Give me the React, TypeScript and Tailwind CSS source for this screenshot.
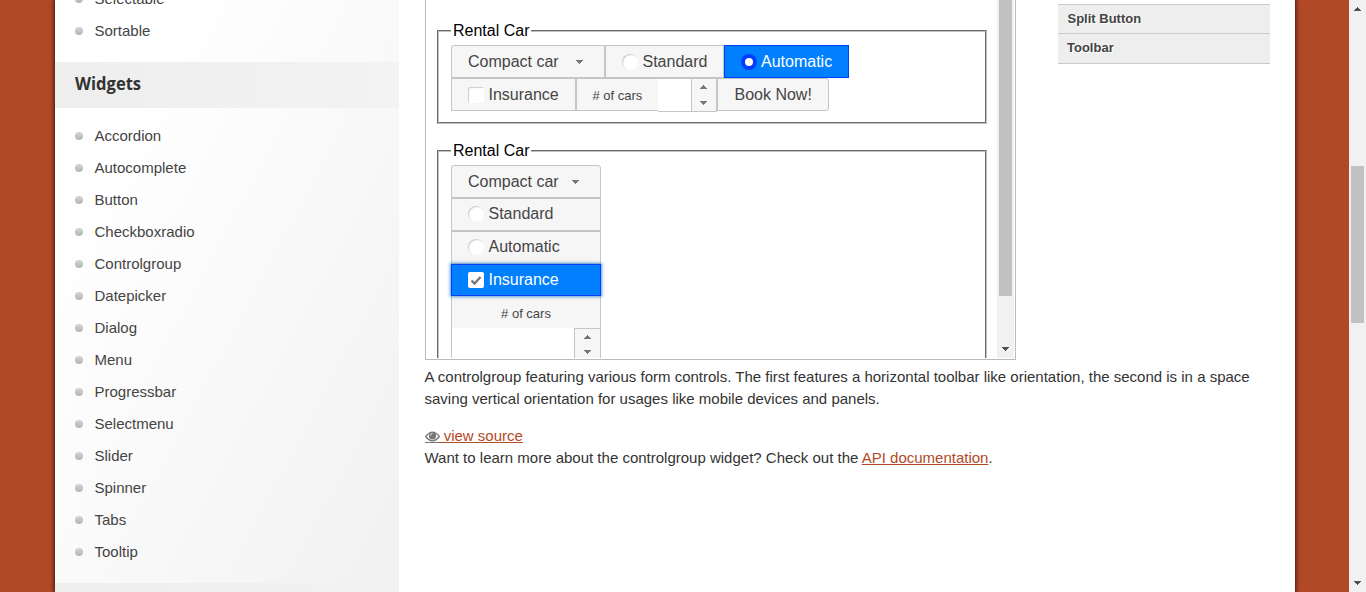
import React from "react";

const widgets = ["Accordion","Autocomplete","Button","Checkboxradio","Controlgroup","Datepicker","Dialog","Menu","Progressbar","Selectmenu","Slider","Spinner","Tabs","Tooltip"];

function NavItem({ label }: { label: string }) {
  return (
    <li className="flex h-8 items-center pl-5 text-[15px] text-[#444]">
      <span className="mr-[11.5px] size-2 rounded-full bg-linear-to-b from-[#d4d4d4] to-[#b4b4b4]" />
      {label}
    </li>
  );
}

function Arrow({ dir = "down", className = "fill-[#505050]" }: { dir?: "up" | "down"; className?: string }) {
  return (
    <svg width="7" height="4" viewBox="0 0 7 4" className={"block shrink-0 " + className} shapeRendering="crispEdges">
      <path d={dir === "down" ? "M0 0h7v1H0zM1 1h5v1H1zM2 2h3v1H2zM3 3h1v1H3z" : "M3 0h1v1H3zM2 1h3v1H2zM1 2h5v1H1zM0 3h7v1H0z"} />
    </svg>
  );
}

function Cell({ className, children }: { className: string; children: React.ReactNode }) {
  return <div className={"flex shrink-0 items-center border whitespace-nowrap " + className}>{children}</div>;
}

const plain = "border-[#c5c5c5] bg-[#f6f6f6] text-[#454545] ";
const radio = "mr-[4.5px] size-4 shrink-0 rounded-full bg-white shadow-[inset_1px_1px_1px_#ccc]";
const box = "mr-[4.5px] size-4 shrink-0 rounded-[2px] bg-white";
const spin = "flex h-[34px] flex-col items-start border border-[#c5c5c5] bg-[#f6f6f6] ";

export default function App() {
  return (
    <div className="flex h-[592px] w-[1366px] overflow-hidden bg-[#b24926] font-['Liberation_Sans',sans-serif]">
      <div className="ml-[55px] flex w-[1240px] shrink-0 bg-white shadow-[0_0_4px_1px_rgba(0,0,0,0.7)]">
        <aside className="h-full w-[344px] shrink-0 overflow-hidden bg-linear-[118deg,#fff_20%,#f1f1f1]">
          <ul className="-mt-[17px]">
            <NavItem label="Selectable" />
            <NavItem label="Sortable" />
          </ul>
          <h3 className="mt-[15px] h-[46px] bg-linear-to-r from-[#eee] to-[#f3f3f3] pl-[19.5px] font-['Open_Sans',sans-serif] text-[18px] leading-[42px] font-bold text-[#333]">
            <span className="inline-block origin-left scale-x-[0.92]">Widgets</span>
          </h3>
          <ul className="mt-3">
            {widgets.map((w) => <NavItem key={w} label={w} />)}
          </ul>
          <div className="mt-[15px] h-3 bg-linear-to-r from-[#eee] to-[#f2f2f2]" />
        </aside>

        <main className="ml-[26px] w-[830px] shrink-0 text-[15px] leading-[22px] text-[#333]">
          <div className="flex h-[360px] w-[591px] overflow-hidden border border-t-0 border-[#bbb] pr-px pb-px">
            <div className="h-[358px] w-[571px] overflow-hidden pl-[11px] text-[16px] leading-[18px] text-black">
              <fieldset className="mt-[22px] h-[102px] w-[550px] border-2 border-[#c0c0c0] px-3 pt-[5px] [border-style:groove]">
                <legend className="h-[18px] px-[2px]">Rental Car</legend>
                <div className="flex">
                  <Cell className={plain + "h-[33px] w-[154px] justify-between rounded-tl-[3px] px-4"}>Compact car <Arrow className="mr-[5px] fill-[#777]" /></Cell>
                  <Cell className={plain + "h-[33px] w-[119px] pl-4"}><span className={radio} />Standard</Cell>
                  <Cell className="h-[33px] w-[125px] border-[#003eff] bg-[#007fff] pl-4 text-white"><span className="mr-1 size-4 shrink-0 rounded-full border-4 border-[#003eff] bg-white" />Automatic</Cell>
                </div>
                <div className="flex">
                  <Cell className={plain + "h-[33px] w-[125px] pl-4"}><span className={box + " shadow-[inset_1px_1px_1px_#ccc]"} />Insurance</Cell>
                  <Cell className={plain + "h-[33px] w-[82px] border-r-0 pt-0.5 pl-[15.5px] text-[13px]"}># of cars</Cell>
                  <div className="h-[34px] w-[33px] border-y border-[#c5c5c5] bg-white" />
                  <div className={spin + "w-[26px] pt-1.5 pl-2"}>
                    <Arrow dir="up" className="mb-3 fill-[#777]" />
                    <Arrow className="fill-[#777]" />
                  </div>
                  <Cell className={plain + "h-[33px] w-[112px] rounded-r-[3px] pl-[16.5px]"}>Book Now!</Cell>
                </div>
              </fieldset>
              <fieldset className="mt-[18px] h-[300px] w-[550px] border-2 border-[#c0c0c0] px-3 pt-[5px] [border-style:groove]">
                <legend className="h-[18px] px-[2px]">Rental Car</legend>
                <div className="flex w-[150px] flex-col">
                  <Cell className={plain + "h-[33px] justify-between rounded-t-[3px] px-4"}>Compact car <Arrow className="mr-[5px] fill-[#777]" /></Cell>
                  <Cell className={plain + "h-[33px] pb-0.5 pl-4"}><span className={radio} />Standard</Cell>
                  <Cell className={plain + "h-[33px] pb-0.5 pl-4"}><span className={radio} />Automatic</Cell>
                  <Cell className="relative h-8 border-[#003eff] bg-[#007fff] pl-4 text-white shadow-[0_0_3px_1px_rgb(94,158,214)]">
                    <span className={box}>
                      <svg width="16" height="16" viewBox="0 0 16 16" fill="none" stroke="#777" strokeWidth="2.4"><path d="M3.5 8.5l3 3L12.5 5" /></svg>
                    </span>Insurance
                  </Cell>
                  <Cell className={plain + "h-8 justify-center border-y-0 pt-1 text-[13px]"}># of cars</Cell>
                  <div className="flex border-l border-[#c5c5c5]">
                    <div className="flex-1" />
                    <div className={spin + "w-[27px] pt-1.5 pl-[9px]"}>
                      <Arrow dir="up" className="mb-[11px] fill-[#777]" />
                      <Arrow className="fill-[#777]" />
                    </div>
                  </div>
                </div>
              </fieldset>
            </div>
            <div className="flex w-[17px] shrink-0 flex-col items-center bg-[#f1f1f1]">
              <div className="h-[296px] w-[13px] shrink-0 bg-[#c1c1c1]" />
              <div className="mt-[51px]"><Arrow /></div>
            </div>
          </div>
          <div className="-ml-[0.5px] pt-1.5">
            <p>A controlgroup featuring various form controls. The first features a horizontal toolbar like orientation, the second is in a space saving vertical orientation for usages like mobile devices and panels.</p>
            <div className="mt-[15px] flex items-center text-[#b24926]">
              <span className="flex h-[13px] w-[15px] items-start border-b border-[#777]">
                <svg width="15" height="12" viewBox="0 0 15 12" className="mt-px shrink-0"><path d="M.7 5.5Q7.5-3.2 14.3 5.5Q7.5 14.2.7 5.5Z" fill="none" stroke="#777" strokeWidth="1.3" /><circle cx="7.5" cy="4.8" r="3.6" fill="#777" /><path d="M5.5 4.5a2 2 0 0 1 2-2" fill="none" stroke="#fff" strokeWidth=".8" /></svg>
              </span>
              <span className="whitespace-pre underline"> view source</span>
            </div>
            <p>Want to learn more about the controlgroup widget? Check out the <a className="text-[#b24926] underline">API documentation</a>.</p>
          </div>
        </main>

        <div className="-ml-[197px] mt-1 h-[60px] w-[212px] border-y border-[#ccc] bg-[#eee] text-[13px] font-bold text-[#444] [text-shadow:1px_1px_0_#fff]">
          <div className="h-[29px] border-b border-[#ccc] pl-[9.5px] leading-[27px]">Split Button</div>
          <div className="h-[29px] pl-[9px] leading-[27px]">Toolbar</div>
        </div>
      </div>
      <div className="relative ml-[54px] flex w-[17px] shrink-0 flex-col items-center bg-[#f1f1f1]">
        <div className="mt-[7px]"><Arrow dir="up" /></div>
        <div className="mt-[155px] h-[157px] w-[13px] bg-[#c1c1c1]" />
        <div className="mt-auto mb-[7px]"><Arrow /></div>
      </div>
    </div>
  );
}
